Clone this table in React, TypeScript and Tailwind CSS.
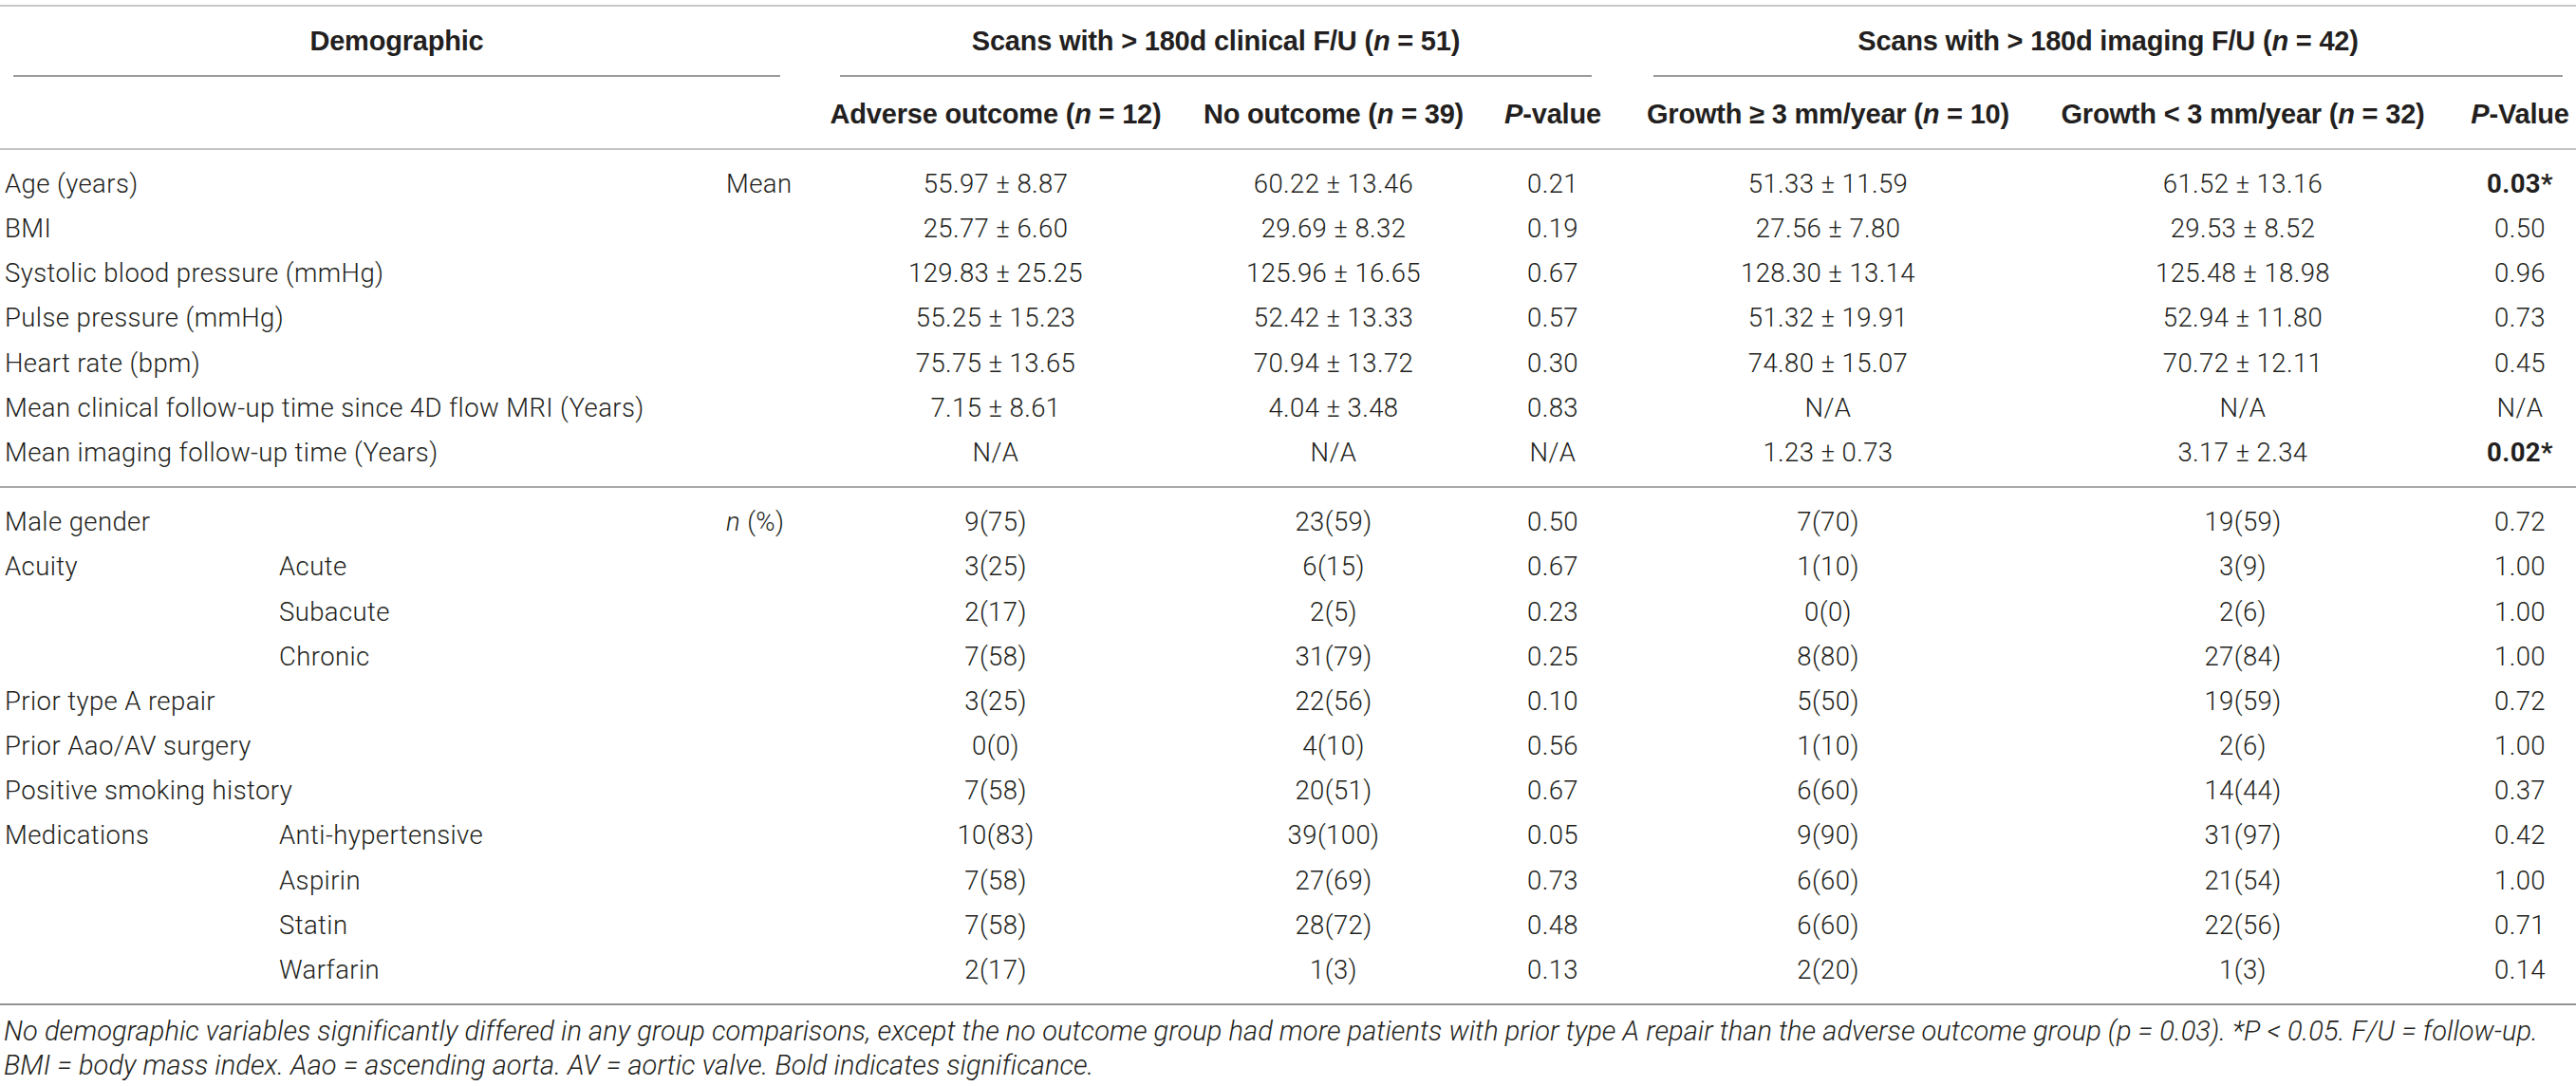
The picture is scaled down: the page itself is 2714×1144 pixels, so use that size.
import React from 'react';

type Row = {
  label: string;
  sub?: string;
  unit?: React.ReactNode;
  values: string[];
  boldLast?: boolean;
};

const grid = 'grid grid-cols-[294px_471px_89px_390px_322px_140px_440px_434px_134px]';

const continuous: Row[] = [
  { label: 'Age (years)', unit: 'Mean', values: ['55.97 ± 8.87', '60.22 ± 13.46', '0.21', '51.33 ± 11.59', '61.52 ± 13.16', '0.03*'], boldLast: true },
  { label: 'BMI', values: ['25.77 ± 6.60', '29.69 ± 8.32', '0.19', '27.56 ± 7.80', '29.53 ± 8.52', '0.50'] },
  { label: 'Systolic blood pressure (mmHg)', values: ['129.83 ± 25.25', '125.96 ± 16.65', '0.67', '128.30 ± 13.14', '125.48 ± 18.98', '0.96'] },
  { label: 'Pulse pressure (mmHg)', values: ['55.25 ± 15.23', '52.42 ± 13.33', '0.57', '51.32 ± 19.91', '52.94 ± 11.80', '0.73'] },
  { label: 'Heart rate (bpm)', values: ['75.75 ± 13.65', '70.94 ± 13.72', '0.30', '74.80 ± 15.07', '70.72 ± 12.11', '0.45'] },
  { label: 'Mean clinical follow-up time since 4D flow MRI (Years)', values: ['7.15 ± 8.61', '4.04 ± 3.48', '0.83', 'N/A', 'N/A', 'N/A'] },
  { label: 'Mean imaging follow-up time (Years)', values: ['N/A', 'N/A', 'N/A', '1.23 ± 0.73', '3.17 ± 2.34', '0.02*'], boldLast: true },
];

const categorical: Row[] = [
  { label: 'Male gender', unit: <><i>n</i> (%)</>, values: ['9(75)', '23(59)', '0.50', '7(70)', '19(59)', '0.72'] },
  { label: 'Acuity', sub: 'Acute', values: ['3(25)', '6(15)', '0.67', '1(10)', '3(9)', '1.00'] },
  { label: '', sub: 'Subacute', values: ['2(17)', '2(5)', '0.23', '0(0)', '2(6)', '1.00'] },
  { label: '', sub: 'Chronic', values: ['7(58)', '31(79)', '0.25', '8(80)', '27(84)', '1.00'] },
  { label: 'Prior type A repair', values: ['3(25)', '22(56)', '0.10', '5(50)', '19(59)', '0.72'] },
  { label: 'Prior Aao/AV surgery', values: ['0(0)', '4(10)', '0.56', '1(10)', '2(6)', '1.00'] },
  { label: 'Positive smoking history', values: ['7(58)', '20(51)', '0.67', '6(60)', '14(44)', '0.37'] },
  { label: 'Medications', sub: 'Anti-hypertensive', values: ['10(83)', '39(100)', '0.05', '9(90)', '31(97)', '0.42'] },
  { label: '', sub: 'Aspirin', values: ['7(58)', '27(69)', '0.73', '6(60)', '21(54)', '1.00'] },
  { label: '', sub: 'Statin', values: ['7(58)', '28(72)', '0.48', '6(60)', '22(56)', '0.71'] },
  { label: '', sub: 'Warfarin', values: ['2(17)', '1(3)', '0.13', '2(20)', '1(3)', '0.14'] },
];

const DataRow = ({ row }: { row: Row }) => (
  <div className={`${grid} h-[47.2px] items-center`}>
    {row.sub !== undefined ? (
      <>
        <div className="pl-[5px] whitespace-nowrap">{row.label}</div>
        <div className="whitespace-nowrap">{row.sub}</div>
      </>
    ) : (
      <div className="col-span-2 pl-[5px] whitespace-nowrap">{row.label}</div>
    )}
    <div className="whitespace-nowrap">{row.unit}</div>
    {row.values.map((v, i) => (
      <div
        key={i}
        className={
          i === 5
            ? `text-center pl-4 whitespace-nowrap ${row.boldLast ? 'font-bold' : ''}`
            : 'text-center whitespace-nowrap'
        }
      >
        {v}
      </div>
    ))}
  </div>
);

export default function App() {
  return (
    <div className="w-[2714px] min-h-[1144px] bg-white pt-[5px] text-[#231f20] font-['Roboto','Liberation_Sans',sans-serif] font-light text-[27.5px] tracking-[0.4px] leading-none">
      <div className="border-t-2 border-[#c8c8c8]" />

      {/* group headers */}
      <div className={`${grid} h-[74px] font-['Liberation_Sans',Arial,sans-serif] font-bold text-[29px] tracking-[-0.2px]`}>
        <div className="col-span-3 ml-[14px] mr-[32px] border-b-2 border-[#9a9a9a] flex items-center justify-center">
          Demographic
        </div>
        <div className="col-span-3 ml-[31px] mr-[29px] border-b-2 border-[#9a9a9a] flex items-center justify-center whitespace-nowrap">
          Scans with &gt; 180d clinical F/U (<i>n</i>&nbsp;= 51)
        </div>
        <div className="col-span-3 ml-[36px] mr-[14px] border-b-2 border-[#9a9a9a] flex items-center justify-center whitespace-nowrap">
          Scans with &gt; 180d imaging F/U (<i>n</i>&nbsp;= 42)
        </div>
      </div>

      {/* sub headers */}
      <div className={`${grid} h-[77px] pt-[4px] items-center border-b-2 border-[#c4c4c4] font-['Liberation_Sans',Arial,sans-serif] font-bold text-[29px] tracking-[-0.2px]`}>
        <div className="col-span-3" />
        <div className="text-center whitespace-nowrap">Adverse outcome (<i>n</i> = 12)</div>
        <div className="text-center whitespace-nowrap">No outcome (<i>n</i> = 39)</div>
        <div className="text-center whitespace-nowrap"><i>P</i>-value</div>
        <div className="text-center whitespace-nowrap">Growth ≥ 3 mm/year (<i>n</i> = 10)</div>
        <div className="text-center whitespace-nowrap">Growth &lt; 3 mm/year (<i>n</i> = 32)</div>
        <div className="text-center pl-4 whitespace-nowrap"><i>P</i>-Value</div>
      </div>

      <div className="py-3 border-b-2 border-[#a8a8a8]">
        {continuous.map((r, i) => (
          <DataRow key={i} row={r} />
        ))}
      </div>

      <div className="py-3 border-b-2 border-[#939393]">
        {categorical.map((r, i) => (
          <DataRow key={i} row={r} />
        ))}
      </div>

      <div className="pt-[9px] pl-[4px] italic text-[29px] tracking-[0.05px] leading-[36px]">
        <p className="whitespace-nowrap">
          No demographic variables significantly differed in any group comparisons, except the no outcome group had more
          patients with prior type A repair than the adverse outcome group (p = 0.03). *P &lt; 0.05. F/U = follow-up.
        </p>
        <p className="whitespace-nowrap">
          BMI = body mass index. Aao = ascending aorta. AV = aortic valve. Bold indicates significance.
        </p>
      </div>
    </div>
  );
}
